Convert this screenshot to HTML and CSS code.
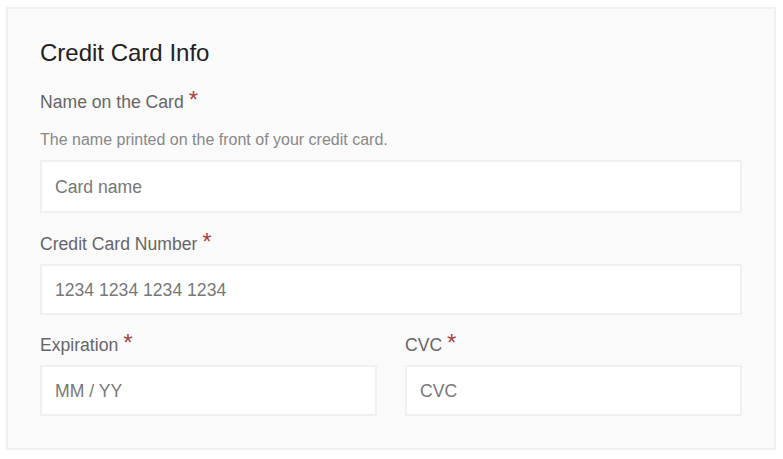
FILE: index.html
```html
<!DOCTYPE html>
<html lang="en">
<head>
    <meta charset="UTF-8">
    <meta name="viewport" content="width=device-width, initial-scale=1.0">
    <link rel="stylesheet" href="styles.css">
    <title>Credit Card Info</title>
</head>
<body>
    <form id="card" class="card">
        <h2 class="title">Credit Card Info</h2>

        <div class="field first">
            <label for="name">Name on the Card <span class="req">*</span></label>
            <p class="help">The name printed on the front of your credit card.</p>
            <input type="text" id="name" class="input" placeholder="Card name">
        </div>

        <div class="field">
            <label for="number">Credit Card Number <span class="req">*</span></label>
            <input type="text" id="number" class="input" placeholder="1234 1234 1234 1234">
        </div>

        <div class="row">
            <div class="field">
                <label for="exp">Expiration <span class="req">*</span></label>
                <input type="text" id="exp" class="input" placeholder="MM / YY">
            </div>
            <div class="field">
                <label for="cvc">CVC <span class="req">*</span></label>
                <input type="text" id="cvc" class="input" placeholder="CVC">
            </div>
        </div>
    </form>
</body>
</html>
```

FILE: styles.css
```css
*{
    margin: 0;
    padding: 0;
    box-sizing: border-box;
}
body{
    margin: 7px 7px 0 6px;
    background-color: #fff;
    font-family: "Liberation Sans", Arial, sans-serif;
}

.card{
    background-color: #fafafa;
    border: 2px solid #f0f0f0;
    padding: 30px 32px 32px 32px;
}
.title{
    font-size: 24px;
    line-height: 28px;
    font-weight: normal;
    color: #222;
}

.field{
    display: flex;
    flex-direction: column;
    margin-top: 17px;
}
.field.first{
    margin-top: 21px;
}
.row .field{
    margin-top: 16px;
}
.field label{
    font-size: 17.6px;
    line-height: 24px;
    color: #666;
    margin-bottom: 8px;
}
.req{
    font-size: 24px;
    line-height: 1;
    color: #a94442;
}
.help{
    font-size: 16px;
    line-height: 24px;
    color: #888;
    margin: 6px 0 8px 0;
}
.input{
    height: 51px;
    padding: 1px 13px 0 13px;
    border: 2px solid #f0f0f0;
    background-color: #fff;
    font-family: "Liberation Sans", Arial, sans-serif;
    font-size: 17.6px;
    color: #333;
    outline: none;
}
.first .input{
    height: 53px;
}
.input::placeholder{
    color: #777;
}

.row{
    display: grid;
    grid-template-columns: 1fr 1fr;
    gap: 28px;
}
```
